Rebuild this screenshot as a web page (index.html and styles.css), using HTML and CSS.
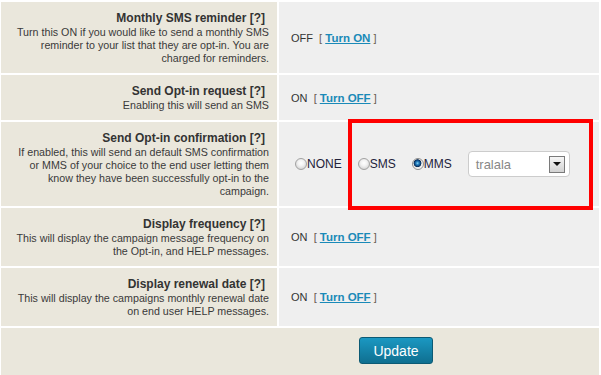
FILE: index.html
```html
<!DOCTYPE html>
<html>
<head>
<meta charset="utf-8">
<title>Campaign settings</title>
<link rel="stylesheet" href="styles.css">
</head>
<body>
<div class="settings">
  <div class="label">
    <div class="title">Monthly SMS reminder [?]</div>
    <div class="desc">Turn this ON if you would like to send a monthly SMS reminder to your list that they are opt-in. You are charged for reminders.</div>
  </div>
  <div class="value">OFF&nbsp; <span class="br">[</span>&nbsp;<a href="#" class="toggle">Turn ON</a>&nbsp;<span class="br">]</span></div>

  <div class="label">
    <div class="title">Send Opt-in request [?]</div>
    <div class="desc">Enabling this will send an SMS</div>
  </div>
  <div class="value">ON&nbsp; <span class="br">[</span>&nbsp;<a href="#" class="toggle">Turn OFF</a>&nbsp;<span class="br">]</span></div>

  <div class="label">
    <div class="title">Send Opt-in confirmation [?]</div>
    <div class="desc">If enabled, this will send an default SMS confirmation or MMS of your choice to the end user letting them know they have been successfully opt-in to the campaign.</div>
  </div>
  <div class="value options">
    <label class="opt"><input type="radio" name="conf" class="radio">NONE</label>
    <label class="opt"><input type="radio" name="conf" class="radio">SMS</label>
    <label class="opt"><input type="radio" name="conf" class="radio" checked>MMS</label>
    <div class="select"><span class="sel-text">tralala</span><span class="arrow"></span></div>
  </div>

  <div class="label">
    <div class="title">Display frequency [?]</div>
    <div class="desc">This will display the campaign message frequency on the Opt-in, and HELP messages.</div>
  </div>
  <div class="value">ON&nbsp; <span class="br">[</span>&nbsp;<a href="#" class="toggle">Turn OFF</a>&nbsp;<span class="br">]</span></div>

  <div class="label">
    <div class="title">Display renewal date [?]</div>
    <div class="desc">This will display the campaigns monthly renewal date on end user HELP messages.</div>
  </div>
  <div class="value">ON&nbsp; <span class="br">[</span>&nbsp;<a href="#" class="toggle">Turn OFF</a>&nbsp;<span class="br">]</span></div>

  <div class="actions"><button class="update">Update</button></div>
</div>
<div class="highlight"></div>
</body>
</html>
```

FILE: styles.css
```css
html, body {
  margin: 0;
  padding: 0;
  background: #ffffff;
}
body {
  position: relative;
  width: 601px;
  height: 375px;
  overflow: hidden;
  font-family: "Liberation Sans", Arial, sans-serif;
  color: #333333;
}
.settings {
  display: grid;
  grid-template-columns: 276px 320px;
  gap: 2px;
  padding: 2px 2px 0 1px;
}
.label {
  background: #eae7dc;
  text-align: right;
  padding: 8px 8px 8px 10px;
}
.title {
  font-size: 12px;
  font-weight: bold;
  line-height: 16px;
  color: #333333;
  padding-right: 4px;
}
.desc {
  font-size: 10.7px;
  line-height: 13px;
  color: #3a3a3a;
}
.value {
  background: #efefef;
  display: flex;
  align-items: center;
  padding-left: 12px;
  font-size: 11px;
  color: #333333;
  white-space: pre;
}
.br {
  color: #6a5d50;
}
.toggle {
  color: #1a8ab8;
  font-weight: bold;
  font-size: 11.5px;
  text-decoration: underline;
}
.options {
  white-space: normal;
  padding-left: 16px;
  gap: 16px;
}
.opt {
  display: flex;
  align-items: center;
  font-size: 12px;
  color: #22223a;
}
.radio {
  appearance: none;
  -webkit-appearance: none;
  margin: 0;
  width: 12px;
  height: 12px;
  border-radius: 50%;
  border: 1px solid #a2a2a2;
  box-sizing: border-box;
  background: radial-gradient(circle at 50% 40%, #ffffff 0, #f2f2f2 3px, #d6d6d6 6px);
}
.radio:checked {
  border-color: #8e8e8e;
  background: radial-gradient(circle at 45% 42%, #8fd6f2 0, #2a86c4 1.4px, #0d4a86 2.8px, #0a2a52 3.6px, #e6e6e6 4.2px, #fafafa 6px);
}
.select {
  display: flex;
  align-items: center;
  justify-content: space-between;
  width: 102px;
  height: 26px;
  box-sizing: border-box;
  border: 1px solid #cccccc;
  border-radius: 4px;
  background: #ffffff;
  padding: 0 4px 0 7px;
}
.sel-text {
  font-size: 13px;
  color: #888888;
}
.arrow {
  width: 16px;
  height: 17px;
  box-sizing: border-box;
  border: 1px solid #7a7a7a;
  background: linear-gradient(#f6f6f6, #d2d2d2);
  display: flex;
  align-items: center;
  justify-content: center;
}
.arrow::after {
  content: "";
  width: 0;
  height: 0;
  border-left: 4px solid transparent;
  border-right: 4px solid transparent;
  border-top: 4px solid #111111;
}
.actions {
  grid-column: 1 / -1;
  background: #eae7dc;
  padding: 9px 0 12px 358px;
}
.update {
  width: 74px;
  height: 27px;
  box-sizing: border-box;
  border: 1px solid #0c5a74;
  border-radius: 3px;
  background: linear-gradient(#1b98c2, #0f6f90);
  color: #ffffff;
  font-family: "Liberation Sans", Arial, sans-serif;
  font-size: 14px;
  padding: 0;
  display: block;
}
.highlight {
  position: absolute;
  left: 348px;
  top: 119px;
  width: 245px;
  height: 91px;
  box-sizing: border-box;
  border: 4px solid #ff0000;
}
```
